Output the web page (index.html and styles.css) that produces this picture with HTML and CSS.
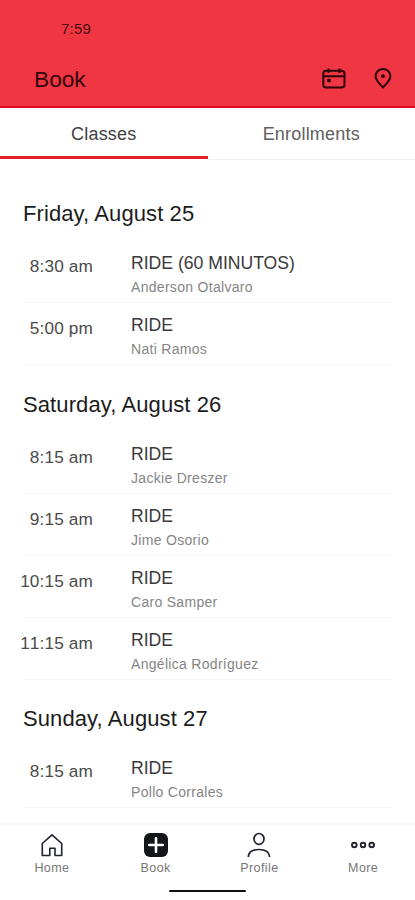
FILE: index.html
```html
<!DOCTYPE html>
<html lang="en">
<head>
<meta charset="utf-8">
<title>Book</title>
<meta name="viewport" content="width=device-width, initial-scale=1">
<link rel="stylesheet" href="styles.css">
</head>
<body>
<div class="app">
  <header class="header">
    <div class="status">7:59</div>
    <div class="bar">
      <h1 class="title">Book</h1>
      <svg class="icon-calendar" width="24" height="22" viewBox="0 0 24 22" fill="none" stroke="currentColor" stroke-width="2">
        <rect x="1.3" y="3.8" width="21.2" height="16.8" rx="2.8"/>
        <path d="M1.3 9.3h21.2M6.5 1.500v4.500M17.500 1.500v4.500"/>
        <rect class="solid" x="5.2" y="11.700" width="3.600" height="3.600" rx="1"/>
      </svg>
      <svg class="icon-pin" width="18" height="22" viewBox="0 0 18 22" fill="none" stroke="currentColor" stroke-width="2">
        <path d="M9 20.400C5.200 16.800 1.600 13.400 1.600 9.100A7.400 7.400 0 0 1 9 1.900a7.400 7.400 0 0 1 7.400 7.200C16.400 13.400 12.800 16.800 9 20.400z"/>
        <circle class="solid" cx="9" cy="9.200" r="1.900"/>
      </svg>
    </div>
  </header>
  <nav class="tabs">
    <a class="tab tab-active">Classes</a>
    <a class="tab">Enrollments</a>
  </nav>
  <main class="schedule">
    <section>
      <h2 class="day">Friday, August 25</h2>
      <div class="row"><time class="time">8:30 am</time><div><div class="name">RIDE (60 MINUTOS)</div><div class="coach">Anderson Otalvaro</div></div></div>
      <div class="row"><time class="time">5:00 pm</time><div><div class="name">RIDE</div><div class="coach">Nati Ramos</div></div></div>
    </section>
    <section>
      <h2 class="day">Saturday, August 26</h2>
      <div class="row"><time class="time">8:15 am</time><div><div class="name">RIDE</div><div class="coach">Jackie Dreszer</div></div></div>
      <div class="row"><time class="time">9:15 am</time><div><div class="name">RIDE</div><div class="coach">Jime Osorio</div></div></div>
      <div class="row"><time class="time">10:15 am</time><div><div class="name">RIDE</div><div class="coach">Caro Samper</div></div></div>
      <div class="row"><time class="time">11:15 am</time><div><div class="name">RIDE</div><div class="coach">Angélica Rodríguez</div></div></div>
    </section>
    <section>
      <h2 class="day">Sunday, August 27</h2>
      <div class="row"><time class="time">8:15 am</time><div><div class="name">RIDE</div><div class="coach">Pollo Corrales</div></div></div>
    </section>
  </main>
  <footer class="footer">
    <nav class="nav">
      <a class="nav-item">
        <svg width="26" height="26" viewBox="0 0 26 26" fill="none" stroke="currentColor" stroke-width="1.6" stroke-linejoin="round"><path d="M3.300 11.500L13 2.800l9.700 8.700V23.500h-6.700v-7.300h-5.200v7.300H3.300z"/></svg>
        <span>Home</span>
      </a>
      <a class="nav-item">
        <svg width="26" height="26" viewBox="0 0 26 26"><rect x="1" y="1" width="24" height="24" rx="6" fill="#15161a"/><path d="M13 6.300v13.400M6.300 13h13.400" stroke="#fff" stroke-width="2.600" stroke-linecap="round"/></svg>
        <span>Book</span>
      </a>
      <a class="nav-item">
        <svg width="26" height="26" viewBox="0 0 26 26" fill="none" stroke="currentColor" stroke-width="1.700"><ellipse cx="13" cy="6.900" rx="5" ry="5.400"/><path d="M2.300 25c.4-5.200 4.200-7.500 10.700-7.500s10.300 2.300 10.700 7.500"/></svg>
        <span>Profile</span>
      </a>
      <a class="nav-item">
        <svg width="26" height="26" viewBox="0 0 26 26" fill="none" stroke="currentColor" stroke-width="1.900"><circle cx="4.300" cy="13" r="2.300"/><circle cx="13" cy="13" r="2.300"/><circle cx="21.700" cy="13" r="2.300"/></svg>
        <span>More</span>
      </a>
    </nav>
    <div class="home-bar"></div>
  </footer>
</div>
</body>
</html>
```
FILE: styles.css
```css
* { box-sizing: border-box; }
body {
  margin: 0;
  background: #fff;
  font-family: "Liberation Sans", Arial, sans-serif;
  color: #222;
}
.app {
  display: flex;
  flex-direction: column;
  height: 900px;
  overflow: hidden;
}
.header {
  flex: none;
  height: 108px;
  background: #f03543;
  border-bottom: 2px solid #e30a20;
  color: #4a0a11;
}
.status {
  padding: 19px 0 0 61px;
  font-size: 15px;
  line-height: 20px;
  letter-spacing: .2px;
}
.bar {
  display: flex;
  align-items: center;
  height: 32px;
  margin-top: 23px;
  padding: 0 23px 0 34px;
}
.title {
  flex: 1;
  margin: 0;
  padding-top: 1px;
  font-size: 22.7px;
  font-weight: 400;
  line-height: 32px;
  color: #35060c;
}
.icon-calendar { margin-right: 28px; }
.icon-calendar, .icon-pin { color: #2b0509; }
.solid { fill: currentColor; stroke: none; }
.tabs {
  flex: none;
  display: flex;
  height: 52px;
}
.tab {
  flex: 1;
  padding-top: 1px;
  border-bottom: 1px solid #f1f1f1;
  font-size: 18px;
  line-height: 50px;
  letter-spacing: .2px;
  text-align: center;
  color: #606060;
}
.tab-active {
  height: 51px;
  border-bottom: 3px solid #e3202b;
  color: #404040;
}
.schedule {
  flex: 1;
  min-height: 0;
  padding: 14.5px 23px 0;
  overflow: hidden;
}
.day {
  height: 66.6px;
  margin: 0;
  padding-top: 27.6px;
  font-size: 22px;
  font-weight: 400;
  line-height: 24px;
  letter-spacing: .1px;
  color: #1c1c1c;
}
.row {
  display: flex;
  height: 62px;
  border-bottom: 1px solid #f4f4f4;
}
.time {
  flex: none;
  width: 76px;
  margin: 15px 38px 0 -6px;
  font-size: 17.2px;
  font-kerning: none;
  line-height: 21px;
  letter-spacing: .15px;
  text-align: right;
  white-space: nowrap;
  color: #4a4a4a;
}
.name {
  margin-top: 11px;
  font-size: 17.6px;
  line-height: 22px;
  color: #3a3a3a;
}
.coach {
  margin-top: 4px;
  font-size: 14px;
  line-height: 18px;
  letter-spacing: .3px;
  color: #858585;
}
.footer {
  flex: none;
  height: 77px;
  border-top: 2px solid #f8f8f8;
}
.nav {
  display: flex;
  padding-top: 7px;
}
.nav-item {
  flex: 1;
  display: flex;
  flex-direction: column;
  align-items: center;
  gap: 1px;
  font-size: 12.5px;
  line-height: 18px;
  color: #20232f;
}
.nav-item span {
  letter-spacing: .4px;
  color: #777;
}
.home-bar {
  width: 77px;
  height: 2px;
  margin: 13px auto 0;
  border-radius: 1px;
  background: #111;
}
```
